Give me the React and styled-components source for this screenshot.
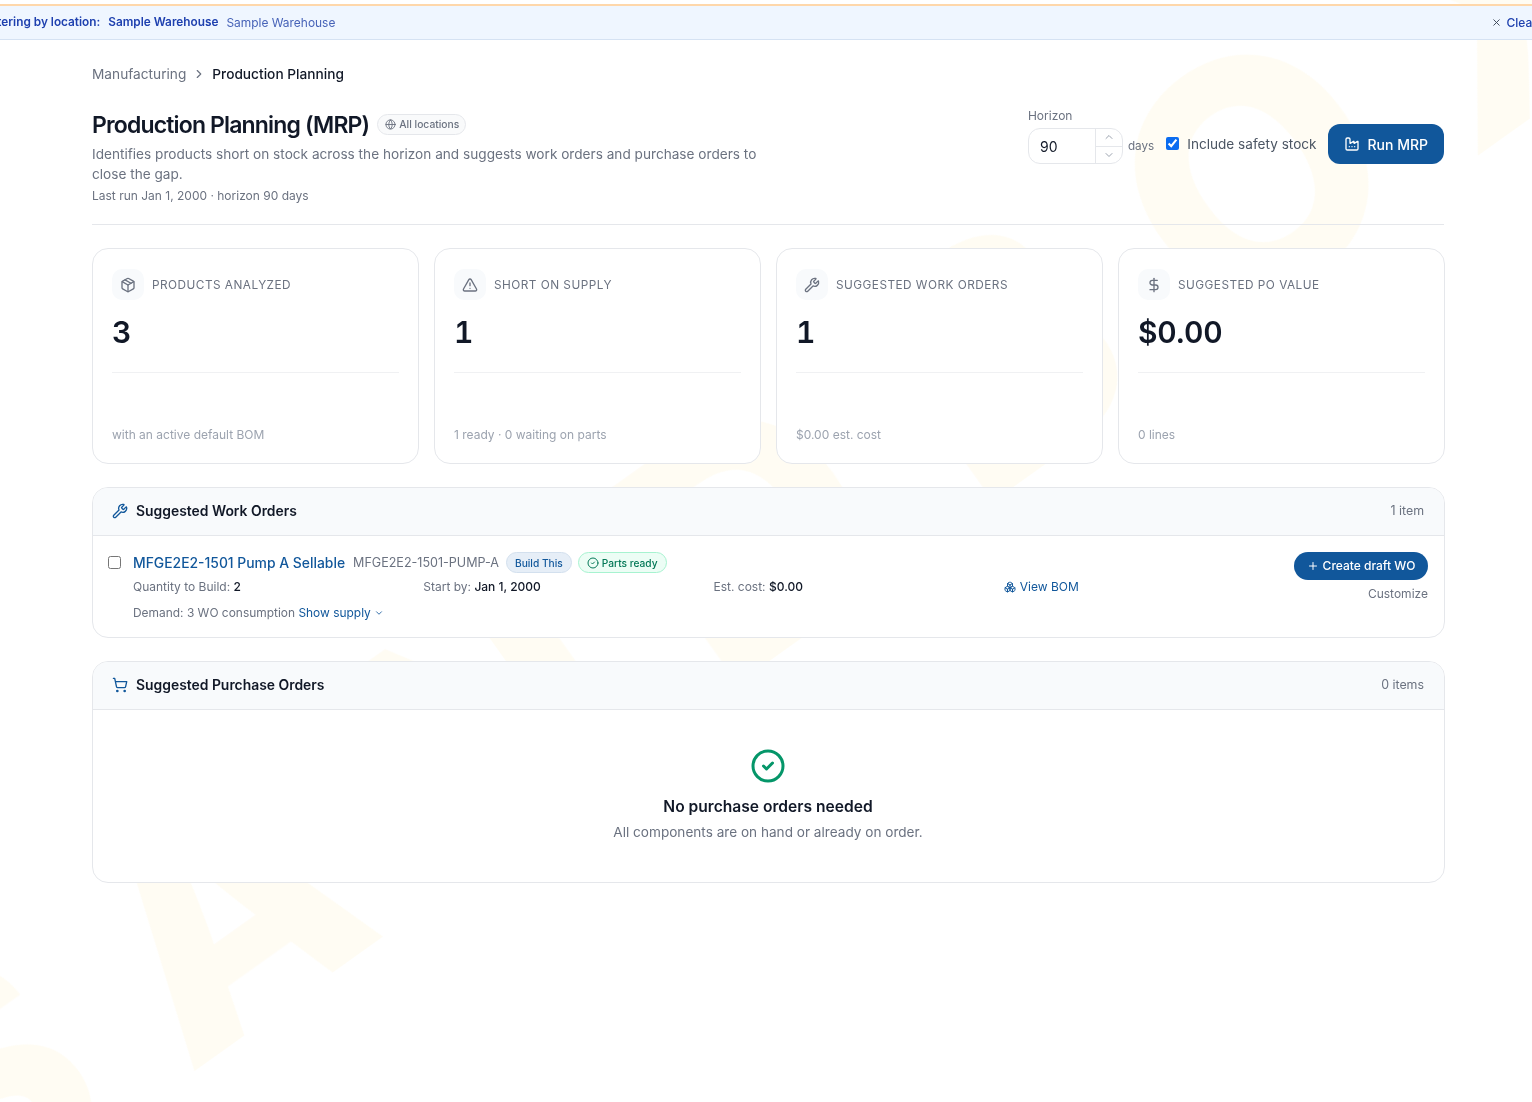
import React from "react";
import styled, { createGlobalStyle } from "styled-components";
import {
  Boxes,
  ChevronDown,
  ChevronRight,
  ChevronUp,
  CircleCheck,
  DollarSign,
  Factory,
  Globe,
  Package,
  Plus,
  ShoppingCart,
  TriangleAlert,
  Wrench,
  X,
} from "lucide-react";

const stats = [
  { icon: Package, label: "Products analyzed", value: "3", note: "with an active default BOM" },
  { icon: TriangleAlert, label: "Short on supply", value: "1", note: "1 ready · 0 waiting on parts" },
  { icon: Wrench, label: "Suggested work orders", value: "1", note: "$0.00 est. cost" },
  { icon: DollarSign, label: "Suggested PO value", value: "$0.00", note: "0 lines" },
];

const App = () => {
  return (
    <>
      <GlobalStyle />
      <SWatermark aria-hidden="true">SANDBOX</SWatermark>
      <SPage>
        <SBanner>
          <SBannerLeft>
            <strong>Filtering by location:</strong>
            <strong>Sample Warehouse</strong>
            <span>Sample Warehouse</span>
          </SBannerLeft>
          <SClear>
            <X size={11} />
            Clear
          </SClear>
        </SBanner>

        <SContent>
          <SBreadcrumb>
            <span>Manufacturing</span>
            <ChevronRight size={14} />
            <b>Production Planning</b>
          </SBreadcrumb>

          <SHeader>
            <div>
              <STitleRow>
                <h1>Production Planning (MRP)</h1>
                <SLocationPill>
                  <Globe size={11} />
                  All locations
                </SLocationPill>
              </STitleRow>
              <SDescription>
                Identifies products short on stock across the horizon and suggests work orders and
                purchase orders to close the gap.
              </SDescription>
              <SLastRun>Last run Jan 1, 2000 · horizon 90 days</SLastRun>
            </div>

            <SControls>
              <SHorizon>
                <label>Horizon</label>
                <SHorizonRow>
                  <SStepper>
                    <input type="text" defaultValue="90" aria-label="Horizon" />
                    <SStepButtons>
                      <span>
                        <ChevronUp size={12} />
                      </span>
                      <span>
                        <ChevronDown size={12} />
                      </span>
                    </SStepButtons>
                  </SStepper>
                  <small>days</small>
                </SHorizonRow>
              </SHorizon>
              <SSafetyStock>
                <input type="checkbox" defaultChecked />
                Include safety stock
              </SSafetyStock>
              <SRunButton>
                <Factory size={16} />
                Run MRP
              </SRunButton>
            </SControls>
          </SHeader>

          <SStats>
            {stats.map((item) => (
              <SStatCard key={item.label}>
                <SStatTop>
                  <SStatIcon>
                    <item.icon size={16} />
                  </SStatIcon>
                  <span>{item.label}</span>
                </SStatTop>
                <SStatValue>{item.value}</SStatValue>
                <SStatNote>{item.note}</SStatNote>
              </SStatCard>
            ))}
          </SStats>

          <SSection>
            <SSectionHead>
              <h2>
                <Wrench size={16} />
                Suggested Work Orders
              </h2>
              <span>1 item</span>
            </SSectionHead>
            <SOrderRow>
              <input type="checkbox" aria-label="Select" />
              <SOrderMain>
                <SOrderName>
                  <a>MFGE2E2-1501 Pump A Sellable</a>
                  <span>MFGE2E2-1501-PUMP-A</span>
                  <SBadge>Build This</SBadge>
                  <SBadge $green>
                    <CircleCheck size={12} />
                    Parts ready
                  </SBadge>
                </SOrderName>
                <SOrderDetails>
                  <div>
                    Quantity to Build: <b>2</b>
                  </div>
                  <div>
                    Start by: <b>Jan 1, 2000</b>
                  </div>
                  <div>
                    Est. cost: <b>$0.00</b>
                  </div>
                  <SBomLink>
                    <Boxes size={12} />
                    View BOM
                  </SBomLink>
                </SOrderDetails>
                <SDemand>
                  Demand: 3 WO consumption{" "}
                  <a>
                    Show supply <ChevronDown size={10} />
                  </a>
                </SDemand>
              </SOrderMain>
              <SOrderActions>
                <SDraftButton>
                  <Plus size={12} />
                  Create draft WO
                </SDraftButton>
                <span>Customize</span>
              </SOrderActions>
            </SOrderRow>
          </SSection>

          <SSection>
            <SSectionHead>
              <h2>
                <ShoppingCart size={16} />
                Suggested Purchase Orders
              </h2>
              <span>0 items</span>
            </SSectionHead>
            <SEmpty>
              <CircleCheck size={36} />
              <h3>No purchase orders needed</h3>
              <p>All components are on hand or already on order.</p>
            </SEmpty>
          </SSection>
        </SContent>
      </SPage>
    </>
  );
};

const GlobalStyle = createGlobalStyle`
  html,
  body {
    margin: 0;
    background: #fff;
    overflow-x: hidden;
  }

  body {
    font-family: Inter, "Liberation Sans", sans-serif;
    color: #111827;
  }

  * {
    box-sizing: border-box;
  }
`;

const SWatermark = styled.div`
  position: fixed;
  top: 50%;
  left: 50%;
  transform: translate(-50%, -50%) rotate(-35.5deg) translate(33px, -25px);

  font-size: 320px;
  font-weight: 800;
  letter-spacing: 0.258em;
  white-space: nowrap;
  color: #fffcf3;

  pointer-events: none;
  user-select: none;
`;

const SPage = styled.div`
  position: relative;
  min-height: 1102px;
  padding-top: 4px;
  overflow: hidden;
`;

const SBanner = styled.div`
  display: flex;
  justify-content: space-between;
  align-items: center;

  height: 36px;
  margin: 0 -21px 0 -32px;
  padding: 0 16px 1px;
  background-color: #eff6ff;

  border-top: 2px solid #fed7aa;
  border-bottom: 1px solid #d5e2f3;

  font-size: 12px;
  color: #1e40af;
`;

const SBannerLeft = styled.div`
  display: flex;
  gap: 8px;

  strong {
    font-size: 11.8px;
    font-weight: 600;
  }

  span {
    font-size: 11.95px;
    color: #4763b8;
  }
`;

const SClear = styled.div`
  display: flex;
  align-items: center;
  gap: 5px;
  font-weight: 500;

  svg {
    color: #374151;
  }
`;

const SContent = styled.main`
  width: 1352px;
  margin-left: 92px;
  padding-top: 24px;
`;

const SBreadcrumb = styled.div`
  display: flex;
  align-items: center;
  gap: 6px;

  height: 20px;
  font-size: 13.7px;
  color: #6b7280;

  b {
    font-weight: 500;
    color: #111827;
  }
`;

const SHeader = styled.header`
  display: flex;
  justify-content: space-between;
  align-items: flex-start;

  margin-top: 24px;
  padding-bottom: 20px;
  border-bottom: 1px solid #e5e7eb;
`;

const STitleRow = styled.div`
  display: flex;
  align-items: center;
  gap: 8px;
  height: 34px;

  h1 {
    margin: 0;
    font-size: 23px;
    line-height: 32px;
    font-weight: 600;
    letter-spacing: -0.84px;
    color: #111827;
  }
`;

const SLocationPill = styled.span`
  display: inline-flex;
  align-items: center;
  gap: 3px;

  height: 21px;
  margin-top: -2px;
  padding: 0 6px 0 7px;
  background-color: #f9fafb;

  border: 1px solid #e5e7eb;
  border-radius: 999px;

  font-size: 10.3px;
  font-weight: 500;
  color: #6b7280;
`;

const SDescription = styled.p`
  width: 680px;
  margin: 2px 0 0;
  font-size: 13.64px;
  line-height: 20px;
  color: #6b7280;
`;

const SLastRun = styled.div`
  margin-top: 4px;
  font-size: 12px;
  line-height: 16px;
  color: #6b7280;
`;

const SControls = styled.div`
  display: flex;
  align-items: flex-end;
  gap: 12px;
`;

const SHorizon = styled.div`
  display: flex;
  flex-direction: column;
  gap: 4px;

  label {
    font-size: 12px;
    line-height: 16px;
    color: #6b7280;
  }
`;

const SHorizonRow = styled.div`
  display: flex;
  align-items: center;
  gap: 5px;

  small {
    font-size: 11.7px;
    color: #6b7280;
  }
`;

const SStepper = styled.div`
  display: flex;

  width: 95px;
  height: 36px;
  background-color: #fff;

  border: 1px solid #e5e7eb;
  border-radius: 12px;
  overflow: hidden;

  input {
    width: 66px;
    padding: 0 0 0 11px;
    border: 0;
    outline: 0;
    background: transparent;
    font: inherit;
    font-size: 14px;
    color: #111827;
  }
`;

const SStepButtons = styled.div`
  display: flex;
  flex: 1;
  flex-direction: column;
  border-left: 1px solid #e5e7eb;

  span {
    display: flex;
    flex: 1;
    justify-content: center;
    align-items: center;
    color: #9ca3af;
  }

  span + span {
    border-top: 1px solid #e5e7eb;
  }
`;

const SSafetyStock = styled.label`
  display: flex;
  align-items: center;
  gap: 8px;

  height: 40px;
  margin-right: -1px;
  padding-bottom: 1px;
  font-size: 13.6px;
  color: #4b5563;

  input {
    width: 13px;
    height: 13px;
    margin: 0;
    accent-color: #0b6cf0;
  }
`;

const SRunButton = styled.button`
  display: flex;
  align-items: center;
  gap: 8px;

  height: 40px;
  padding: 0 16px;
  background-color: #11579b;

  border: 0;
  border-radius: 12px;

  font: inherit;
  font-size: 14px;
  font-weight: 500;
  color: #fff;
`;

const SStats = styled.section`
  display: grid;
  grid-template-columns: repeat(4, 1fr);
  gap: 15px;
  margin: 23px -1px 0 0;
`;

const SStatCard = styled.article`
  display: flex;
  flex-direction: column;

  height: 216px;
  padding: 20px 19px;
  background-color: #fff;

  border: 1px solid #e5e7eb;
  border-radius: 16px;
`;

const SStatTop = styled.div`
  display: flex;
  align-items: center;
  gap: 8px;

  font-size: 11.8px;
  font-weight: 400;
  letter-spacing: 0.04em;
  text-transform: uppercase;
  color: #6b7280;
`;

const SStatIcon = styled.span`
  display: flex;
  justify-content: center;
  align-items: center;

  width: 32px;
  height: 31px;
  background-color: #f8fafc;
  border-radius: 10px;
  color: #6b7280;
`;

const SStatValue = styled.div`
  margin-top: 14px;
  padding-bottom: 22px;
  border-bottom: 1px solid #f0f1f3;

  font-size: 30px;
  line-height: 36px;
  font-weight: 600;
  font-variant-numeric: tabular-nums;
  letter-spacing: -0.01em;
  color: #111827;
`;

const SStatNote = styled.div`
  margin-top: auto;
  font-size: 12px;
  line-height: 16px;
  color: #9ca3af;
`;

const SSection = styled.section`
  margin: 23px -1px 0 0;
  background-color: #fff;

  border: 1px solid #e5e7eb;
  border-radius: 16px;
  overflow: hidden;
`;

const SSectionHead = styled.div`
  display: flex;
  justify-content: space-between;
  align-items: center;

  height: 48px;
  padding: 0 20px 2px 19px;
  background-color: #f8fafc;
  border-bottom: 1px solid #e5e7eb;

  h2 {
    display: flex;
    align-items: center;
    gap: 8px;
    margin: 0;
    font-size: 13.9px;
    font-weight: 600;
    color: #111827;
  }

  h2 svg {
    color: #11579b;
  }

  > span {
    font-size: 12.4px;
    color: #6b7280;
  }
`;

const SOrderRow = styled.div`
  display: flex;
  align-items: flex-start;

  padding: 16px 16px 14px 15px;

  > input {
    width: 13px;
    height: 13px;
    margin: 4px 12px 0 0;
    flex: none;
  }
`;

const SOrderMain = styled.div`
  flex: 1;
  min-width: 0;
`;

const SOrderName = styled.div`
  display: flex;
  align-items: center;
  gap: 8px;
  height: 21px;

  a {
    font-size: 13.9px;
    font-weight: 500;
    color: #11579b;
  }

  > span:nth-child(2) {
    margin-right: -1px;
    font-size: 12.55px;
    color: #6b7280;
  }

  > span:nth-child(4) {
    margin-left: -2px;
  }
`;

const SBadge = styled.span`
  display: inline-flex;
  align-items: center;
  gap: 3px;

  height: 21px;
  padding: 0 8px;
  background-color: ${(props) => (props.$green ? "#ecfdf5" : "#e6eef7")};

  border: 1px solid ${(props) => (props.$green ? "#a7f3d0" : "#d3e0ee")};
  border-radius: 999px;

  font-size: 10.2px;
  font-weight: 500;
  color: ${(props) => (props.$green ? "#047857" : "#11579b")};
`;

const SOrderDetails = styled.div`
  display: grid;
  grid-template-columns: repeat(4, 1fr);

  margin-top: 6px;
  font-size: 12px;
  line-height: 16px;
  color: #6b7280;

  b {
    font-weight: 500;
    color: #111827;
  }
`;

const SBomLink = styled.div`
  display: flex;
  align-items: center;
  gap: 4px;
  color: #11579b;
`;

const SDemand = styled.div`
  margin-top: 8px;
  font-size: 11.95px;
  line-height: 20px;
  color: #6b7280;

  a {
    color: #11579b;
  }

  svg {
    vertical-align: -1px;
  }
`;

const SOrderActions = styled.div`
  display: flex;
  flex: none;
  flex-direction: column;
  align-items: flex-end;
  gap: 6px;

  width: 134px;
  font-size: 12px;
  line-height: 16px;
  color: #6b7280;
`;

const SDraftButton = styled.button`
  display: flex;
  justify-content: center;
  align-items: center;
  gap: 4px;

  width: 100%;
  height: 28px;
  background-color: #11579b;

  border: 0;
  border-radius: 999px;

  font: inherit;
  font-size: 12px;
  font-weight: 500;
  color: #fff;
`;

const SEmpty = styled.div`
  display: flex;
  flex-direction: column;
  align-items: center;

  height: 172px;
  padding: 38px 1px 0 0;

  svg {
    color: #059669;
  }

  h3 {
    margin: 11px 0 0;
    font-size: 15.6px;
    line-height: 24px;
    font-weight: 600;
    color: #111827;
  }

  p {
    margin: 3px 0 0;
    font-size: 13.6px;
    line-height: 20px;
    color: #6b7280;
  }
`;

export default App;
